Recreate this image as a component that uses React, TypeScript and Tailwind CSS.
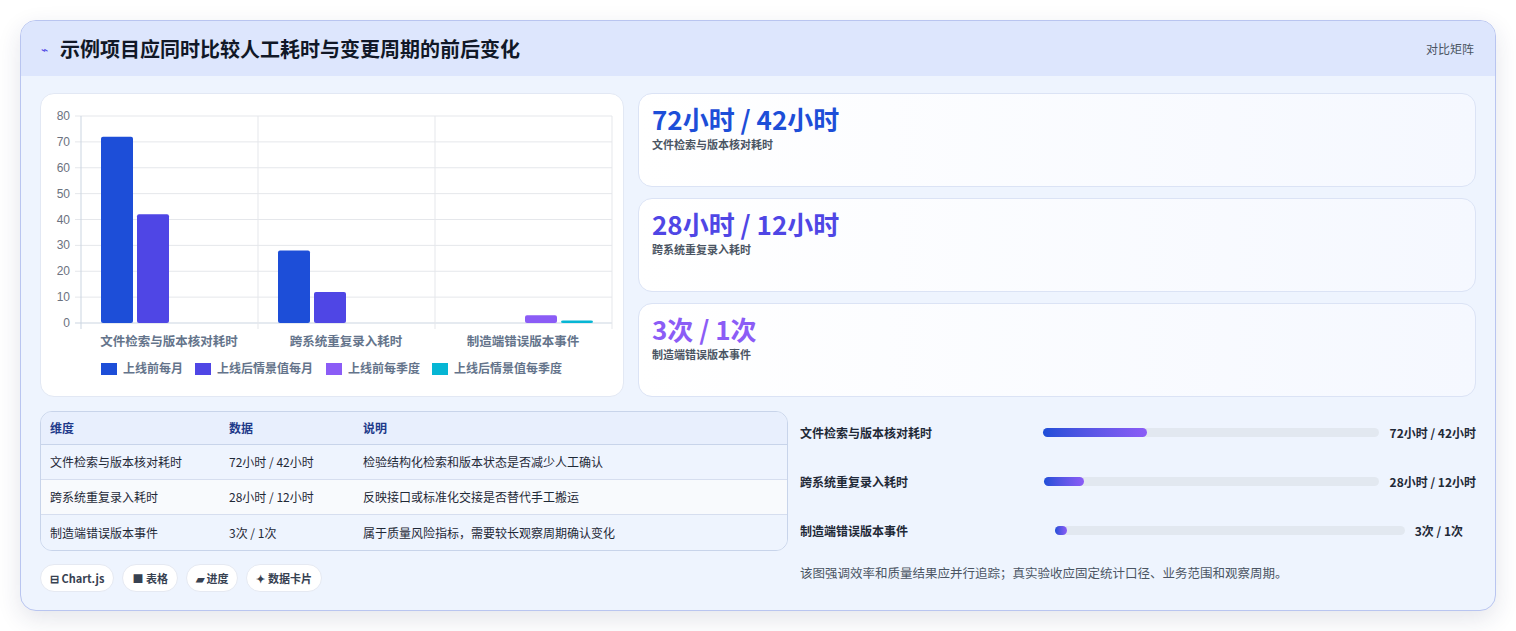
import React from "react";

const F = { fontFamily: '"Noto Sans CJK SC", "Noto Sans", sans-serif' };

function Chart() {
  const y0 = 229, step = 25.875;
  const Y = (v: number) => y0 - (v / 10) * step;
  const bars = [
    { x: 60, v: 72, c: "#1d4ed8" }, { x: 96, v: 42, c: "#4f46e5" },
    { x: 237, v: 28, c: "#1d4ed8" }, { x: 273, v: 12, c: "#4f46e5" },
    { x: 484, v: 3, c: "#8b5cf6" }, { x: 520, v: 1, c: "#06b6d4" },
  ];
  const legend = [
    { x: 60, c: "#1d4ed8", t: "上线前每月" },
    { x: 154, c: "#4f46e5", t: "上线后情景值每月" },
    { x: 285, c: "#8b5cf6", t: "上线前每季度" },
    { x: 391, c: "#06b6d4", t: "上线后情景值每季度" },
  ];
  return (
    <svg width="583" height="303" style={F}>
      {[0, 1, 2, 3, 4, 5, 6, 7, 8].map((i) => (
        <g key={i}>
          <line x1={34} x2={571} y1={Y(i * 10)} y2={Y(i * 10)} stroke={i === 0 ? "#cbd5e1" : "#e5e7eb"} />
          <text x={29} y={Y(i * 10) + 4} textAnchor="end" fontSize="12" fill="#6b7280" fontFamily="Liberation Sans, sans-serif">{i * 10}</text>
        </g>
      ))}
      {[40, 217, 394, 571].map((x) => (
        <line key={x} x1={x} x2={x} y1={Y(80)} y2={y0 + 6} stroke={x === 40 ? "#cbd5e1" : "#e5e7eb"} />
      ))}
      {bars.map((b, i) => (
        <rect key={i} x={b.x} y={Y(b.v)} width={32} height={y0 - Y(b.v)} rx={2} fill={b.c} />
      ))}
      {[["文件检索与版本核对耗时", 128], ["跨系统重复录入耗时", 305], ["制造端错误版本事件", 482]].map(([t, x]) => (
        <text key={t as string} x={x as number} y={252} textAnchor="middle" fontSize="12.5" fontWeight="600" fill="#64748b">{t}</text>
      ))}
      {legend.map((l) => (
        <g key={l.t}>
          <rect x={l.x} y={269} width={16} height={12} fill={l.c} />
          <text x={l.x + 22} y={279} fontSize="12" fontWeight="600" fill="#64748b">{l.t}</text>
        </g>
      ))}
    </svg>
  );
}

const stats = [
  { v: "72小时 / 42小时", l: "文件检索与版本核对耗时", c: "text-[#1d4ed8]" },
  { v: "28小时 / 12小时", l: "跨系统重复录入耗时", c: "text-[#4f46e5]" },
  { v: "3次 / 1次", l: "制造端错误版本事件", c: "text-[#8b5cf6]" },
];

const rows = [
  ["文件检索与版本核对耗时", "72小时 / 42小时", "检验结构化检索和版本状态是否减少人工确认"],
  ["跨系统重复录入耗时", "28小时 / 12小时", "反映接口或标准化交接是否替代手工搬运"],
  ["制造端错误版本事件", "3次 / 1次", "属于质量风险指标，需要较长观察周期确认变化"],
];

const progress = [
  { l: "文件检索与版本核对耗时", v: "72小时 / 42小时", p: 31, lw: "w-[243px]", vw: "w-[97px]", pr: "" },
  { l: "跨系统重复录入耗时", v: "28小时 / 12小时", p: 12, lw: "w-[244px]", vw: "w-[97px]", pr: "" },
  { l: "制造端错误版本事件", v: "3次 / 1次", p: 3.5, lw: "w-[255px]", vw: "w-[58px]", pr: "pr-[13px]" },
];

export default function App() {
  return (
    <div className="w-[1516px] h-[631px] bg-white pt-[20px] pl-[20px]" style={F}>
      <div className="w-[1476px] h-[591px] rounded-[16px] border border-[#b9c5f0] bg-[#eef4fe] overflow-hidden shadow-[0_8px_24px_rgba(30,41,90,0.12)]">
        <div className="h-[55px] bg-[#dde6fd] flex items-center justify-between px-[20px]">
          <div className="flex items-center gap-[12px]">
            <span className="text-[#4f46e5] text-[12px]">⌁</span>
            <span className="text-[20px] font-bold text-[#111827]">示例项目应同时比较人工耗时与变更周期的前后变化</span>
          </div>
          <span className="text-[12px] text-[#4b5563] mr-[1px]">对比矩阵</span>
        </div>
        <div className="px-[19px] pt-[17px]">
          <div className="flex gap-[14px]">
            <div className="w-[584px] h-[304px] bg-white rounded-[14px] border border-[#e2e8f4]">
              <Chart />
            </div>
            <div className="flex-1 flex flex-col gap-[11px]">
              {stats.map((s) => (
                <div key={s.l} className="h-[94px] rounded-[14px] border border-[#dbe3f5] bg-gradient-to-r from-white to-[#f5f8ff] px-[13px] pt-[8px]">
                  <div className={`text-[26px] font-bold leading-[34px] ${s.c}`}>{s.v}</div>
                  <div className="text-[11px] font-semibold text-[#4b5563]">{s.l}</div>
                </div>
              ))}
            </div>
          </div>
          <div className="flex gap-[12px] mt-[14px]">
            <div className="w-[748px]">
              <div className="rounded-[12px] border border-[#c8d4ea] overflow-hidden text-[12px]">
                <div className="flex h-[33px] items-center bg-[#e8effd] text-[#1e3a8a] font-semibold border-b border-[#c8d4ea]">
                  <div className="w-[188px] pl-[9px]">维度</div><div className="w-[134px]">数据</div><div>说明</div>
                </div>
                {rows.map((r, i) => (
                  <div key={i} className={`flex h-[35px] items-center text-[#1f2937] ${i === 1 ? "bg-[#f8fafd]" : "bg-[#eef4fe]"} ${i < 2 ? "border-b border-[#d6deef]" : ""}`}>
                    <div className="w-[188px] pl-[9px]">{r[0]}</div><div className="w-[134px]">{r[1]}</div><div>{r[2]}</div>
                  </div>
                ))}
              </div>
              <div className="flex gap-[8px] mt-[13px] text-[11px] font-bold text-[#374151]">
                {["⊟ Chart.js", "■ 表格", "▰ 进度", "✦ 数据卡片"].map((t) => (
                  <span key={t} className="h-[28px] px-[9px] flex items-center rounded-full bg-white border border-[#e5e9f2]">{t}</span>
                ))}
              </div>
            </div>
            <div className="flex-1 -mt-[3px]">
              {progress.map((p) => (
                <div key={p.l} className={`h-[49px] flex items-center text-[12px] font-semibold text-[#1f2937] ${p.pr}`}>
                  <div className={`${p.lw} shrink-0`}>{p.l}</div>
                  <div className="flex-1 h-[9px] rounded-full bg-[#e2e8f0]">
                    <div className="h-full rounded-full bg-gradient-to-r from-[#1d4ed8] to-[#8b5cf6]" style={{ width: `${p.p}%`, minWidth: 10 }} />
                  </div>
                  <div className={`${p.vw} shrink-0 text-right font-bold`}>{p.v}</div>
                </div>
              ))}
              <div className="mt-[9px] text-[12.5px] text-[#4b5563]">该图强调效率和质量结果应并行追踪；真实验收应固定统计口径、业务范围和观察周期。</div>
            </div>
          </div>
        </div>
      </div>
    </div>
  );
}
